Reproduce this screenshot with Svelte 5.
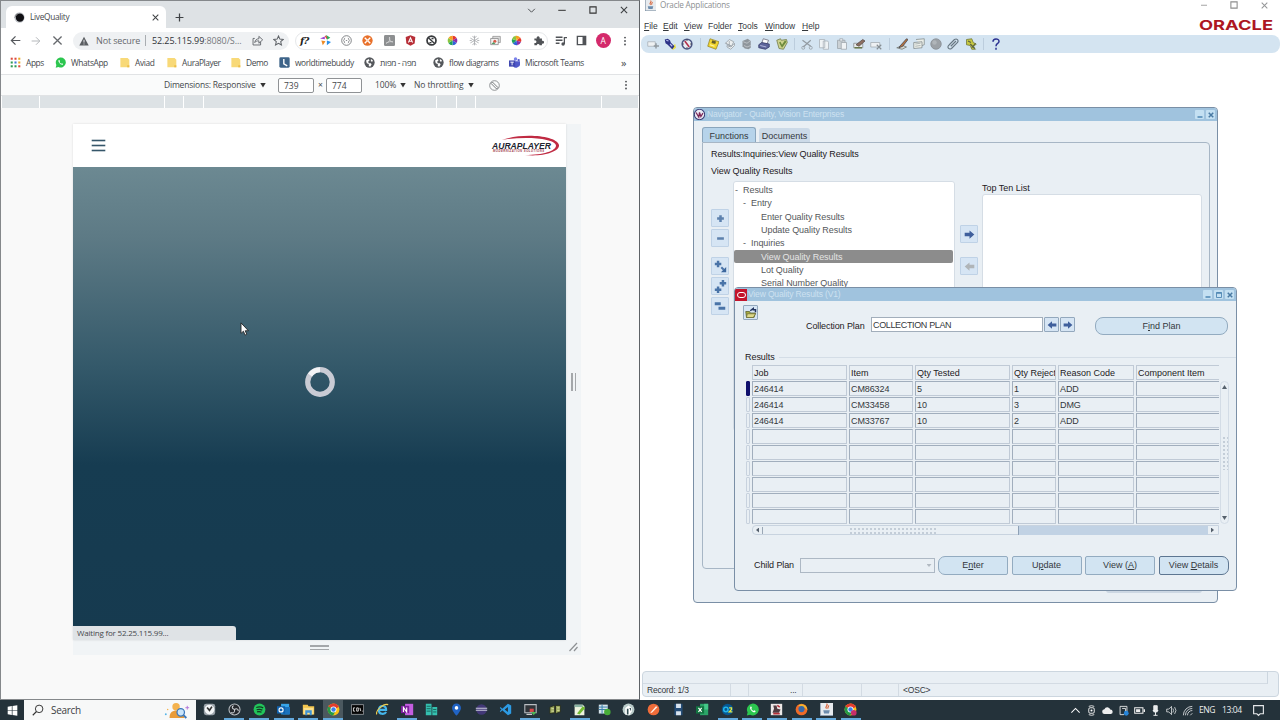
<script lang="ts">
	const extensions = ['pinwheel', 'braces', 'xorange', 'adobe', 'angular', 'nosign', 'wheel', 'flake', 'photo', 'wheel2', 'puzzle'];

	const bookmarks = [
		{ icon: 'apps', label: 'Apps', width: 45 },
		{ icon: 'whatsapp', label: 'WhatsApp', width: 64 },
		{ icon: 'folder', label: 'Aviad', width: 47 },
		{ icon: 'folder', label: 'AuraPlayer', width: 64 },
		{ icon: 'folder', label: 'Demo', width: 49 },
		{ icon: 'clock', label: 'worldtimebuddy', width: 85 },
		{ icon: 'globe', label: 'מפה - מפות', width: 69 },
		{ icon: 'globe', label: 'flow diagrams', width: 76 },
		{ icon: 'teams', label: 'Microsoft Teams', width: 80 }
	];

	const rulerSegments = [37, 124, 18, 19, 232, 19, 18, 125, 36];

	const menus = [
		['', 'F', 'ile', 19],
		['', 'E', 'dit', 21],
		['', 'V', 'iew', 24],
		['Fo', 'l', 'der', 30],
		['', 'T', 'ools', 27],
		['', 'W', 'indow', 37],
		['', 'H', 'elp', 20]
	];

	const toolGroups = [
		['newrec', 'torch', 'compass'],
		['save', 'stack', 'database', 'printer', 'check'],
		['cut', 'copy', 'paste', 'clear', 'delrec'],
		['pencil', 'folders', 'disc', 'clip', 'tools'],
		['help']
	];

	const tree = [
		{ level: 0, label: 'Results', open: true },
		{ level: 1, label: 'Entry', open: true },
		{ level: 2, label: 'Enter Quality Results' },
		{ level: 2, label: 'Update Quality Results' },
		{ level: 1, label: 'Inquiries', open: true },
		{ level: 2, label: 'View Quality Results', selected: true },
		{ level: 2, label: 'Lot Quality' },
		{ level: 2, label: 'Serial Number Quality' }
	];

	const columns = ['Job', 'Item', 'Qty Tested', 'Qty Reject', 'Reason Code', 'Component Item'];
	const rows = [
		['246414', 'CM86324', '5', '1', 'ADD', ''],
		['246414', 'CM33458', '10', '3', 'DMG', ''],
		['246414', 'CM33767', '10', '2', 'ADD', ''],
		...Array.from({ length: 6 }, () => ['', '', '', '', '', ''])
	];

	const tasks = [
		{ icon: 'tclock' },
		{ icon: 'obs', running: true },
		{ icon: 'spotify', running: true },
		{ icon: 'outlook', running: true },
		{ icon: 'explorer', running: true },
		{ icon: 'chrome', running: true, active: true },
		{ icon: 'cmd' },
		{ icon: 'ie' },
		{ icon: 'onenote', running: true },
		{ icon: 'server' },
		{ icon: 'pin' },
		{ icon: 'eclipse' },
		{ icon: 'vscode' },
		{ icon: 'monitor', running: true },
		{ icon: 'winscp' },
		{ icon: 'notepad', running: true },
		{ icon: 'sheet' },
		{ icon: 'bird' },
		{ icon: 'postman' },
		{ icon: 'disk' },
		{ icon: 'excel' },
		{ icon: 'o2', running: true },
		{ icon: 'whatsapp', running: true },
		{ icon: 'joker', running: true },
		{ icon: 'firefox', running: true },
		{ icon: 'java', running: true },
		{ icon: 'chrome2', running: true }
	];

	const tray = ['up', 'meet', 'cloud', 'sync', 'battery', 'mic', 'sound', 'wifi'];

	const wheelSlices = `
		<path fill="#e8382c" d="M8 8V1a7 7 0 0 1 6 3.5z"/><path fill="#8d2fa8" d="M8 8l6-3.5a7 7 0 0 1 0 7z"/>
		<path fill="#2f62d8" d="M8 8l6 3.5A7 7 0 0 1 8 15z"/><path fill="#1fa35a" d="M8 8v7a7 7 0 0 1-6-3.5z"/>
		<path fill="#8bc53f" d="M8 8l-6 3.5a7 7 0 0 1 0-7z"/><path fill="#f4a21f" d="M8 8L2 4.5A7 7 0 0 1 8 1z"/>`;

	const chromeLogo = `
		<circle cx="8" cy="8" r="7.3" fill="#fbc116"/>
		<path fill="#e33b2e" d="M8 8L1.7 4.3A7.3 7.3 0 0 1 14.6 5z"/>
		<path fill="#249a48" d="M8 8L1.7 4.3A7.3 7.3 0 0 0 7.5 15.3L10.5 10z"/>
		<circle cx="8" cy="8" r="3.7" fill="#fff"/><circle cx="8" cy="8" r="2.7" fill="#3d7fe8"/>`;

	const icons: Record<string, string> = {
		favicon: '<circle cx="8" cy="8" r="7.5" fill="#c3c6cb"/><circle cx="8.6" cy="8.2" r="6" fill="#101014"/><path d="M2 5l3-3M1 8l2-3" stroke="#555" fill="none"/>',
		close: '<path d="M3 3l10 10M13 3L3 13" stroke="#3f4245" stroke-width="1.8" fill="none"/>',
		stop: '<path d="M3 3l10 10M13 3L3 13" stroke="#66696d" stroke-width="1.6" fill="none"/>',
		plus: '<path d="M8 1v14M1 8h14" stroke="#3f4245" stroke-width="2.2" fill="none"/>',
		chevron: '<path d="M2 5l6 6 6-6" stroke="#3f4245" stroke-width="1.6" fill="none"/>',
		minimise: '<path d="M2 8.5h12" stroke="#333" stroke-width="1.6" fill="none"/>',
		maximise: '<path d="M3 3h10v10H3z" stroke="#333" stroke-width="1.7" fill="none"/>',
		winmin: '<path d="M3 12h10" stroke="#4f87b3" stroke-width="3" fill="none"/>',
		winmax: '<path d="M3 3h10v10H3z" stroke="#4f87b3" stroke-width="1.8" fill="none"/><path d="M3 4h10" stroke="#4f87b3" stroke-width="3"/>',
		winclose: '<path d="M3.500 3.500l9 9M12.500 3.500l-9 9" stroke="#4a7ba4" stroke-width="3" fill="none"/>',
		back: '<path d="M15 8H2M8 2L2 8l6 6" stroke="#55585c" stroke-width="1.8" fill="none"/>',
		forward: '<path d="M1 8h13M8 2l6 6-6 6" stroke="#b5b8bb" stroke-width="1.6" fill="none"/>',
		warning: '<path d="M8 1l7.5 14H.5z" fill="#5b5e62"/><path d="M8 6v4.5M8 12v1.5" stroke="#f0f2f4" stroke-width="1.5"/>',
		share: '<path d="M4 5H1.500v9.500h11V10M4 11c.5-4 3-5.500 6-5.500V2l5.500 5-5.500 5V8.500c-3 0-4.500.5-6 2.500z" stroke="#5f6368" stroke-width="1.300" fill="none"/>',
		star: '<path d="M8 1.500l2 4.500 4.800.5-3.600 3.200 1.100 4.800L8 12l-4.300 2.500 1.100-4.800L1.200 6.500 6 6z" stroke="#5f6368" stroke-width="1.500" fill="none"/>',
		pinwheel: '<path d="M0 5l7-3v4z" fill="#9b42d0"/><path d="M9 0l6 4-5 3z" fill="#25b35d"/><path d="M2 8l6 1-4 6z" fill="#ef8b22"/><path d="M10 8l6 2-6 5z" fill="#2b8fe8"/><path d="M8 1l2 4" stroke="#e3372e" stroke-width="2"/>',
		braces: '<circle cx="8" cy="8" r="7" stroke="#74777b" stroke-width="1.300" fill="none"/><path d="M6 4.500c-2 0-.5 3-2.200 3.500C5.500 8.500 4 11.500 6 11.500M10 4.500c2 0 .5 3 2.200 3.500-1.700.5-.2 3.500-2.200 3.500M7 8h2" stroke="#74777b" stroke-width="1.200" fill="none"/>',
		xorange: '<circle cx="8" cy="8" r="7.500" fill="#e8702a"/><path d="M4 4l8 8M12 4l-8 8" stroke="#fff" stroke-width="2"/><circle cx="8" cy="8" r="2" fill="#ffd7bd"/>',
		adobe: '<rect width="16" height="16" rx="2" fill="#8d8f91"/><path d="M3 12c5-2 6-5 5-9-1 4 1 7 5 7-4-1-7 0-10 2z" stroke="#d4d5d6" stroke-width="1.200" fill="none"/>',
		angular: '<path d="M8 .5l7 2.500-1 9.500-6 3-6-3L1 3z" fill="#b72f38"/><path d="M5 11l3-7 3 7M6 9h4" stroke="#fff" stroke-width="1.500" fill="none"/>',
		nosign: '<circle cx="8" cy="8" r="6.500" stroke="#383a3d" stroke-width="2.500" fill="none"/><path d="M3.500 4l9 8.500M5 11h3M8 5h3" stroke="#383a3d" stroke-width="2"/>',
		wheel: wheelSlices,
		wheel2: '<g transform="rotate(50 8 8)">' + wheelSlices + '</g>',
		flake: '<path d="M8 1v14M2 4.500l12 7M14 4.500l-12 7M5 2l3 2 3-2M5 14l3-2 3 2M1 8h3M12 8h3" stroke="#a5a8ab" stroke-width="1.200" fill="none"/>',
		photo: '<path d="M4 2h11v9H4z" fill="#ddd" stroke="#888"/><path d="M1 5h11v9H1z" fill="#f3f3f3" stroke="#777"/><circle cx="7" cy="9" r="2.200" fill="#d85c4a"/><path d="M2 13l3-3 3 3z" fill="#4f9a62"/>',
		puzzle: '<path d="M2 5h3.500a2.200 2.200 0 1 1 4 0H13v3.500a2.200 2.200 0 1 1 0 4V15H9.500a2 2 0 1 0-4 0H2v-3.500a2 2 0 1 0 0-3.500z" fill="#505357"/>',
		playlist: '<path d="M1 3h9M1 7h9M1 11h5M12.500 12V3.500H16" stroke="#505357" stroke-width="1.700" fill="none"/><circle cx="10.800" cy="12" r="2.300" fill="#505357"/>',
		panel: '<path d="M2 2h12v12H2z" stroke="#505357" stroke-width="2" fill="none"/><path d="M9.500 2H14v12H9.500z" fill="#505357"/>',
		dots: '<g fill="#505357"><circle cx="8" cy="2.500" r="1.500"/><circle cx="8" cy="8" r="1.500"/><circle cx="8" cy="13.500" r="1.500"/></g>',
		apps: '<path d="M1 1h3v3H1z" fill="#dc4a3d"/><path d="M6.500 1h3v3h-3z" fill="#dc4a3d"/><path d="M12 1h3v3h-3z" fill="#e9a825"/><path d="M1 6.500h3v3H1z" fill="#2f9b55"/><path d="M6.500 6.500h3v3h-3z" fill="#3e77d6"/><path d="M12 6.500h3v3h-3z" fill="#e9a825"/><path d="M1 12h3v3H1z" fill="#2f9b55"/><path d="M6.500 12h3v3h-3z" fill="#2f9b55"/><path d="M12 12h3v3h-3z" fill="#dc4a3d"/>',
		whatsapp: '<path d="M1 15.500l1-4A7.300 7.300 0 1 1 5 14.500z" fill="#2cc64f"/><path d="M5.500 4.500c-2 2 2.500 7.500 5.500 6.800 1.300-.8 1-1.500-.8-2.300l-1 .8C8 9.300 7 8.300 6.500 7.200l.8-1c-.5-1.500-1-2-1.800-1.700z" fill="#fff"/>',
		folder: '<path d="M2 1.500h10.500L15 4v11H2z" fill="#f8d978"/><path d="M12 12h3v3h-3z" fill="#edbd45"/>',
		clock: '<rect x=".5" y=".5" width="15" height="15" rx="2" fill="#3e6489"/><path d="M7 3v7l5 3" stroke="#fff" stroke-width="2" fill="none"/>',
		globe: '<circle cx="8" cy="8" r="7.500" fill="#55585c"/><path d="M3 5l4-2 1 2-2 2 1 2 3 0 1 2-2 3-2-1 0-3-3-1zM10 3l3 2-1 2-2-1z" fill="#fff"/>',
		teams: '<circle cx="9.500" cy="3" r="2.500" fill="#7b83eb"/><circle cx="14" cy="4.500" r="1.700" fill="#5059c9"/><path d="M6 6h10v4a4 4 0 0 1-3 4.500 5 5 0 0 1-7-1z" fill="#5059c9"/><path d="M0 5h9v9H0z" fill="#4048b0"/><path d="M2 7.500h5M4.500 7.500V12" stroke="#fff" stroke-width="1.300"/>',
		rotate: '<circle cx="8" cy="8" r="7" stroke="#7c7f82" stroke-width="1.200" fill="none"/><path d="M5 3l8 8-2 2-8-8z" stroke="#6b6e71" stroke-width="1.300" fill="none"/>',
		java: '<rect width="16" height="16" fill="#e7ebef"/><path d="M0 0v16h16" stroke="#71859a" stroke-width="1.600" fill="none"/><path d="M8 1c3 2-3 3 0 6M10.500 3c1 1-2 2-.5 4" stroke="#d9653b" stroke-width="1.500" fill="none"/><path d="M4 9h8l-1 4H5z" fill="#6d8cad"/>',
		newrec: '<path d="M1 5h10v6H1z" fill="#eef1f3" stroke="#a5adb4"/><path d="M12 7v7M9 10.500h7" stroke="#9199a0" stroke-width="2"/>',
		torch: '<path d="M9 12l6-4 1 5-4 3z" fill="#e9e04a"/><path d="M1 2l4-1 3 2 1 3 5 5-3 4-6-6-3-2z" fill="#2c3287"/><path d="M3 3l3 1M8 8l3 3" stroke="#b8bdf0" stroke-width="1.500"/>',
		compass: '<circle cx="8" cy="8" r="6.500" fill="#e8ecf4" stroke="#4b5582" stroke-width="2"/><path d="M5 4l6 8" stroke="#b12e4a" stroke-width="2"/><path d="M8 2v2M8 12v2M2 8h2M12 8h2" stroke="#333"/>',
		save: '<path d="M4 1l12 4-4 10L1 11z" fill="#f2d52d" stroke="#94842a"/><path d="M7 3l5 1.500-1 3.500-5-1.500z" fill="#665f27"/><path d="M4 9l6 2" stroke="#fff8a8" stroke-width="1.500"/>',
		stack: '<path d="M2 7l5-5 6 3-3 6zM4 10l5 2 5-5v3l-5 5-5-3zM7 4v8M2 7l8 4" fill="#edf0f1" stroke="#9aa1a7" stroke-width="1.100"/>',
		database: '<path d="M2 4l7-3 4 3v9l-3 2-5-1-3-3z" fill="#8f969c"/><path d="M3 5l5 2 4-3M4 10l4 2 5-2" stroke="#c9ced1" fill="none"/>',
		printer: '<path d="M5 7l2-6 7 2-2 5z" fill="#fff" stroke="#667"/><path d="M1 9l4-3 10 2v4l-5 3-9-2z" fill="#5d659b" stroke="#343a67"/><path d="M3 10l8 2" stroke="#ccd0ef"/>',
		check: '<path d="M1 3l5-2 1 2 7-1 1 4-5 9-6-1z" fill="#cdd28d" stroke="#6c7541"/><path d="M4 6l4 7 6-8-2-2-4 6-2-4z" fill="#6d8a3c"/>',
		cut: '<path d="M2 3l11 8M13 3L3 12" stroke="#939ba2" stroke-width="1.600"/><circle cx="3" cy="13" r="2" stroke="#939ba2" fill="none"/><circle cx="13" cy="13" r="2" stroke="#939ba2" fill="none"/>',
		copy: '<path d="M2 2h7v11H2zM7 4h6l1 2v9H7z" fill="#eff3f5" stroke="#a7afb6"/>',
		paste: '<path d="M2 3h10v11H2z" fill="#cbd1d5" stroke="#9ba3a9"/><path d="M5 1h4v3H5zM7 6h7v9H7z" fill="#f0f3f5" stroke="#9ba3a9"/>',
		clear: '<path d="M1 7h12v6H1z" fill="#e9ecea" stroke="#81878b"/><path d="M4 9l9-7 3 2-8 7z" fill="#8d6f61" stroke="#574b48"/><path d="M2 13h10" stroke="#687849" stroke-width="2"/>',
		delrec: '<path d="M1 6h12v6H1z" fill="#eef1f3" stroke="#a1a9af"/><path d="M9 9l6 6M15 9l-6 6" stroke="#868e94" stroke-width="1.500"/>',
		pencil: '<path d="M1 13l8-3 5 2-6 3z" fill="#d6d8d0" stroke="#6f746f"/><path d="M5 11L14 1l2 1-7 9-5 2z" fill="#b8733e" stroke="#3c4350"/>',
		folders: '<path d="M4 2l11-1v8l-3 1M1 6l11-1v8l-11 1z" fill="#ecefe9" stroke="#7e8788"/><path d="M3 8l7-1M3 11l7-1" stroke="#9ca4a5"/>',
		disc: '<circle cx="8" cy="8" r="7" fill="#9ca1a6" stroke="#858b91"/><circle cx="6" cy="6" r="3" fill="#b0b5b9"/>',
		clip: '<path d="M3 9l7-7c3-2 6 1 4 4l-8 8c-3 2-6-1-4-4l7-7M5 11l7-7" stroke="#687782" stroke-width="1.500" fill="none"/>',
		tools: '<path d="M2 2l7-1 2 5 4 2-4 4 3 3-5 0-2-5-5-1z" fill="#c7c841" stroke="#6b7435"/><path d="M4 4l4 2M7 8l6 6M14 7l-5 6" stroke="#5b6341" stroke-width="1.500"/>',
		help: '<path d="M4 5c0-5 8-5 8-.5C12 7.500 8 7 8 11M8 13v2.500" stroke="#2c3291" stroke-width="2" fill="none"/>',
		nav: '<circle cx="8" cy="8" r="7.500" fill="#eaeaf4" stroke="#3e3f79" stroke-width="1.500"/><path d="M3 5l4 7 1-7 2 6 3-5" stroke="#7c2757" stroke-width="1.800" fill="none"/>',
		expand: '<path d="M8 2v12M2 8h12" stroke="#5d81ad" stroke-width="4.500"/>',
		collapse: '<path d="M2 8h12" stroke="#5d81ad" stroke-width="4.500"/>',
		branch: '<path d="M5 1v8M1 5h8" stroke="#4a74a8" stroke-width="3"/><path d="M9 9l3 3" stroke="#4a74a8" stroke-width="2.500"/><path d="M15 8.500V15H8.500z" fill="#3c679d"/>',
		branchall: '<path d="M11 0v8M7 4h8M5 8v8M1 12h8" stroke="#4a74a8" stroke-width="3"/>',
		collapseall: '<path d="M1 5h8M6 11h9" stroke="#4a74a8" stroke-width="4"/>',
		right: '<path d="M1 5.500h7V2l7 6-7 6v-3.500H1z" fill="#3f5f9c"/>',
		left: '<path d="M15 5.500H8V2L1 8l7 6v-3.500h7z" fill="#3f5f9c"/>',
		leftoff: '<path d="M15 5.500H8V2L1 8l7 6v-3.500h7z" fill="#b0b5b8"/>',
		open: '<path d="M1 6h5l1 2h7l-2 6H2z" fill="#a9ad3f" stroke="#575b2c"/><path d="M3 9h11l-3 5H2z" fill="#ded989" stroke="#6b6c35"/><path d="M7 5l4-3v1.500h3V7" stroke="#23345f" stroke-width="2" fill="none"/>',
		start: '<path d="M1 2.500l6-1v6H1zM8 1.300L15 .3v7.200H8zM1 8.500h6v6l-6-1zM8 8.500h7v7.200l-7-1z" fill="#fff"/>',
		search: '<circle cx="9.500" cy="6.500" r="5" stroke="#333" stroke-width="1.300" fill="none"/><path d="M6 10l-5 5" stroke="#333" stroke-width="1.500"/>',
		tclock: '<rect x="1" y="1" width="14" height="14" rx="3" fill="#9ba3aa"/><circle cx="8" cy="8" r="6" fill="#f2f4f6"/><path d="M5 5.500L8 9l3-4.500" stroke="#333" stroke-width="2" fill="none"/>',
		obs: '<circle cx="8" cy="8" r="6.800" fill="#25282c" stroke="#babfc4" stroke-width="1.300"/><path d="M8 8c-4-1-3-4-1-4.500M8 8c3-2 5 0 4.500 2M8 8c1 4-2 5-4 3.500" stroke="#d0d4d8" stroke-width="1.300" fill="none"/>',
		spotify: '<circle cx="8" cy="8" r="7.300" fill="#22c55b"/><path d="M4 5.500q5-1.500 8.500.5M4.500 8.300q4-1.200 7 .5M5 11q3-1 5.500.4" stroke="#123b22" stroke-width="1.500" fill="none"/>',
		outlook: '<path d="M5 1h10v13H5z" fill="#38a5e8"/><path d="M10 5h6v9H7z" fill="#1b73bd"/><path d="M0 4h10v9H0z" fill="#0f61ad"/><circle cx="5" cy="8.500" r="2.500" stroke="#fff" stroke-width="1.400" fill="none"/>',
		explorer: '<path d="M1 2h6l1 2h7v10H1z" fill="#f4c64e"/><path d="M2 6h12v8H2z" fill="#fbe08d"/><path d="M4 9h8v6h-2.500v-3h-3v3H4z" fill="#3f93d5"/>',
		chrome: chromeLogo,
		chrome2: chromeLogo + '<circle cx="12" cy="12" r="3.500" fill="#c72f6b"/>',
		cmd: '<path d="M.5 2h15v12H.5z" fill="#050505" stroke="#9ba0a5"/><path d="M5 6H3v4h2M7 6v4h2V6zM11 6l1 4M14 10h1" stroke="#e2e2e2" stroke-width="1.100" fill="none"/>',
		ie: '<path d="M3.500 8.500h9C13 2.500 4 1.500 3.500 8.500c0 6 7 6 9 2.500" stroke="#45b6ec" stroke-width="2.600" fill="none"/><path d="M1 14C-1 10 9 0 15 2" stroke="#edcc4f" stroke-width="1.500" fill="none"/>',
		onenote: '<path d="M5 1h10v14H5z" fill="#c35ee0"/><path d="M0 3.500h10v9H0z" fill="#7d1f9e"/><path d="M3 11V5.500L7 11V5.500" stroke="#fff" stroke-width="1.400" fill="none"/>',
		server: '<path d="M1 1h7v14H1zM9 5h6v10H9z" fill="#35c0b0"/><path d="M2 4h5M2 7h5M2 10h5M10 8h4M10 11h4" stroke="#12564f"/>',
		pin: '<path d="M8 .5a5.500 5.500 0 0 1 5.500 5.500C13.500 10 8 15.500 8 15.500S2.500 10 2.500 6A5.500 5.500 0 0 1 8 .5z" fill="#2063c4"/><circle cx="8" cy="6" r="2.200" fill="#fff"/>',
		eclipse: '<circle cx="8" cy="8" r="6.500" fill="#423877"/><path d="M1 6.500h14M1 9h14" stroke="#c9c9dc" stroke-width="1.300"/>',
		vscode: '<path d="M11 1l4 2v10l-4 2-7-6-2 2-1-1 2-2-2-2 1-1 2 2zM11 5L7 8l4 3z" fill="#2d9be4" fill-rule="evenodd"/>',
		monitor: '<path d="M1 2h14v10H1z" fill="#30353a" stroke="#b9bec3" stroke-width="1.300"/><path d="M3 14h7" stroke="#ccc" stroke-width="1.500"/><path d="M7 7h5v4H7z" fill="#d94a4a"/><path d="M9 11h6l-3 4z" fill="#4fba55"/>',
		winscp: '<path d="M1 5l6-2v9l-6 1zM8 3h6v8l-6 2z" fill="#9aa75b" stroke="#20251b"/><path d="M3 7h3M10 6h3M3 10h3M10 9h3" stroke="#e6eab4"/>',
		notepad: '<path d="M2 2h10l2 2v11H2z" fill="#eef3df"/><path d="M2 2h10v3H2z" fill="#8bb3a3"/><path d="M5 13l7-9 3 2-7 8z" fill="#73bb32"/>',
		sheet: '<path d="M1 2h11v11H1z" fill="#d6e4ea"/><path d="M1 5h11M1 8h11M5 2v11" stroke="#397fac" stroke-width="1.200"/><circle cx="11.500" cy="11" r="4" fill="#47ad38"/>',
		bird: '<circle cx="8" cy="8" r="7.300" fill="#b9cbc9"/><path d="M4 14V6l4-3 4 3v4l-3 5z" fill="#fff"/><path d="M6 7h2v7H6zM9 6h2v4" fill="#304c50"/>',
		postman: '<circle cx="8" cy="8" r="7.200" fill="#ef6c39"/><path d="M4 12l7-8 2 1-7 7z" fill="#fff0e7"/>',
		disk: '<path d="M3 1h10v14H3z" fill="#254d77"/><path d="M5 1h6v5H5zM5 10h6v5H5z" fill="#d8e3ee"/>',
		excel: '<path d="M5 1h10v14H5z" fill="#2ba568"/><path d="M10 1h5v7h-5z" fill="#44c889"/><path d="M0 4h10v9H0z" fill="#127541"/><path d="M3 6l4 5M7 6l-4 5" stroke="#fff" stroke-width="1.400"/>',
		o2: '<circle cx="8" cy="8" r="7" fill="#075892"/><circle cx="6" cy="8" r="2.700" stroke="#23b6eb" stroke-width="1.800" fill="none"/><path d="M10 6h3v2l-3 3h4" stroke="#e5e840" stroke-width="1.500" fill="none"/>',
		joker: '<path d="M1 1h14v14H1z" fill="#ebe8e7"/><path d="M4 3h4l1 4 4 1-2 4H3l2-5z" fill="#513b40"/><path d="M9 3l3 2M4 13h8" stroke="#b52f38" stroke-width="2"/>',
		firefox: '<circle cx="8" cy="8" r="7.200" fill="#ef6b28"/><path d="M4 3c5-4 12 1 11 6-3-5-6-3-11-6z" fill="#f5b72f"/><circle cx="8" cy="7.500" r="3.800" fill="#376aa9"/>',
		up: '<path d="M2 11l6-6 6 6" stroke="#fff" stroke-width="1.500" fill="none"/>',
		meet: '<path d="M4 2q4-2 8 0M4 14q4 2 8 0" stroke="#eee" stroke-width="1.300" fill="none"/><rect x="4" y="4" width="8" height="8" rx="2" stroke="#eee" stroke-width="1.400" fill="none"/><circle cx="8" cy="8" r="1.500" fill="#fff"/>',
		cloud: '<path d="M4 13a3.500 3.500 0 0 1-.5-7A4.500 4.500 0 0 1 12 6.500 3.300 3.300 0 0 1 13 13z" fill="#eee"/>',
		sync: '<path d="M3 2h10v9M3 2v12h6M6 5h5v5" stroke="#e5e7e9" stroke-width="1.300" fill="none"/><circle cx="12" cy="12" r="3.500" fill="#2785d9"/>',
		battery: '<path d="M1 4h12v8H1z" stroke="#eee" stroke-width="1.500" fill="none"/><path d="M3 6h6v4H3zM14 6h2v4h-2z" fill="#eee"/>',
		mic: '<path d="M5.500 1h5v9h-5zM4 8h8M8 9v6M5 15h6" fill="#e9ebec" stroke="#e9ebec" stroke-width="1.400"/>',
		sound: '<path d="M1 6h3l4-4v12l-4-4H1zM10 5q2 3 0 6M12.500 3q4 5 0 10" stroke="#dcdfe1" stroke-width="1.200" fill="none"/>',
		wifi: '<path d="M2 15A13 13 0 0 1 15 2M5 15A10 10 0 0 1 15 5M8 15a7 7 0 0 1 7-7M12 15l3-3" stroke="#c8cccf" stroke-width="1.400" fill="none"/>',
		notice: '<path d="M2 2h12v10h-4l-2 2-2-2H2z" stroke="#e5e7e9" stroke-width="1.400" fill="none"/>'
	};
</script>

{#snippet icon(name: string, size = 10)}
	<svg class="icon" viewBox="0 0 16 16" width={size} height={size} aria-hidden="true">
		{@html icons[name]}
	</svg>
{/snippet}

<div class="desktop">
	<div class="workspace">
		<section class="browser">
			<div class="tabstrip">
				<div class="tab">
					{@render icon('favicon', 11)}
					<span class="tab-title">LiveQuality</span>
					{@render icon('close', 9)}
				</div>
				<span class="new-tab">{@render icon('plus', 9)}</span>
				<div class="caption">
					{@render icon('chevron', 9)}
					{@render icon('minimise', 10)}
					{@render icon('maximise', 10)}
					{@render icon('close', 10)}
				</div>
			</div>

			<div class="toolbar">
				<div class="nav-buttons">
					{@render icon('back', 11)}
					{@render icon('forward', 10)}
					{@render icon('stop', 13)}
				</div>
				<div class="omnibox">
					{@render icon('warning', 10)}
					<span class="secure">Not secure</span>
					<span class="url">52.25.115.99<span>:8080/S...</span></span>
					{@render icon('share', 11)}
					{@render icon('star', 11)}
				</div>
				<div class="extensions">
					<span class="fx">f?</span>
					{#each extensions as name}
						<span class="ext">{@render icon(name, 11)}</span>
					{/each}
				</div>
				<span class="ext after">{@render icon('playlist', 12)}</span>
				<span class="ext">{@render icon('panel', 11)}</span>
				<span class="avatar">A</span>
				<span class="more">{@render icon('dots', 10)}</span>
			</div>

			<div class="bookmarks">
				{#each bookmarks as mark}
					<span class="bookmark" style:width="{mark.width}px">
						{@render icon(mark.icon, 11)}
						<span>{mark.label}</span>
					</span>
				{/each}
				<span class="overflow">»</span>
			</div>

			<div class="device-bar">
				<span class="dimensions">Dimensions: Responsive</span>
				<i class="caret"></i>
				<span class="size">739</span>
				<span class="times">×</span>
				<span class="size">774</span>
				<span class="zoom">100%</span>
				<i class="caret"></i>
				<span class="throttle">No throttling</span>
				<i class="caret"></i>
				<span class="rotate">{@render icon('rotate', 11)}</span>
				<span class="device-more">{@render icon('dots', 10)}</span>
			</div>

			<div class="ruler">
				{#each rulerSegments as width}
					<span style:width="{width}px"></span>
				{/each}
			</div>

			<div class="stage">
				<div class="device">
					<div class="app">
						<header>
							<span class="burger"><i></i><i></i><i></i></span>
							<svg class="aura" viewBox="0 0 70 24" width="70" height="24">
								<path d="M11 6C30-1 65 1 68 11c1 7-17 12-34 10 18 0 31-4 31-9.500C64 4 33 2 11 6z" fill="#c02b43" />
								<text x="1" y="14.500" textLength="59" lengthAdjust="spacingAndGlyphs">AURAPLAYER</text>
								<text class="tagline" x="2" y="18" textLength="51">MODERNIZATION SOLUTIONS</text>
							</svg>
						</header>
						<div class="screen">
							<svg class="spinner" viewBox="0 0 34 34" width="34" height="34">
								<circle cx="17" cy="17" r="12.300" fill="none" stroke="#c9cbd4" stroke-width="5.200" />
								<path d="M7 10A12.300 12.300 0 0 1 17 4.700" fill="none" stroke="#f3f4f6" stroke-width="5" />
							</svg>
							<span class="status-bubble">Waiting for 52.25.115.99...</span>
						</div>
					</div>
					<div class="handle-right"><i></i><i></i></div>
					<div class="handle-bottom"><span><i></i><i></i></span></div>
					<svg class="handle-corner" viewBox="0 0 15 15" width="15" height="15"><path d="M3.500 11L11 3M8 11l3.500-4" stroke="#8e9194" stroke-width="1.200" /></svg>
				</div>
			</div>
			<svg class="cursor" viewBox="0 0 10 16" width="9" height="14"><path d="M1 1v12l2.800-2.500L5.600 15l2-1-1.800-4H9.500z" fill="#fff" stroke="#222" /></svg>
		</section>

		<section class="oracle">
			<div class="oracle-title">
				{@render icon('java', 11)}
				<span class="title-text">Oracle Applications</span>
				<div class="oracle-caption">
					{@render icon('minimise', 8)}
					{@render icon('maximise', 10)}
					{@render icon('close', 9)}
				</div>
			</div>
			<div class="menubar">
				{#each menus as [before, key, after, width]}
					<span class="menu" style:width="{width}px">{before}<u>{key}</u>{after}</span>
				{/each}
				<svg class="oracle-logo" viewBox="0 0 78 14" width="78" height="14"><text x="0" y="12" textLength="74" lengthAdjust="spacingAndGlyphs">ORACLE</text></svg>
			</div>
			<div class="form-tools">
				{#each toolGroups as group}
					<div class="tool-group">
						{#each group as name}
							<span>{@render icon(name, 12)}</span>
						{/each}
					</div>
				{/each}
			</div>

			<div class="mdi">
				<div class="window navigator">
					<div class="window-title">
						{@render icon('nav', 11)}
						<span class="caption-text">Navigator - Quality, Vision Enterprises</span>
						<div class="window-buttons">
							<b>{@render icon('winmin', 8)}</b>
							<b>{@render icon('winclose', 8)}</b>
						</div>
					</div>
					<div class="nav-tabs">
						<span class="nav-tab current">Functions</span>
						<span class="nav-tab">Documents</span>
					</div>
					<div class="nav-panel">
						<div class="path">Results:Inquiries:View Quality Results</div>
						<div class="path second">View Quality Results</div>
						<div class="nav-columns">
							<div class="side-buttons">
								<b>{@render icon('expand', 9)}</b>
								<b>{@render icon('collapse', 9)}</b>
								<b class="gap">{@render icon('branch', 13)}</b>
								<b>{@render icon('branchall', 13)}</b>
								<b>{@render icon('collapseall', 12)}</b>
							</div>
							<div class="tree">
								{#each tree as node}
									<div class="node level{node.level}" class:selected={node.selected}>
										{#if node.open}<span class="dash">-</span>{/if}{node.label}
									</div>
								{/each}
							</div>
							<div class="move-buttons">
								<b>{@render icon('right', 11)}</b>
								<b>{@render icon('leftoff', 11)}</b>
							</div>
							<div class="top-ten">
								<span>Top Ten List</span>
								<div class="top-list"></div>
							</div>
						</div>
					</div>
					<div class="peek"></div>
				</div>

				<div class="window results">
					<div class="window-title">
						<span class="o-badge"><i></i></span>
						<span class="caption-text">View Quality Results (V1)</span>
						<div class="window-buttons">
							<b>{@render icon('winmin', 8)}</b>
							<b>{@render icon('winmax', 8)}</b>
							<b>{@render icon('winclose', 8)}</b>
						</div>
					</div>
					<div class="plan-row">
						<b class="open">{@render icon('open', 12)}</b>
						<span class="plan-label">Collection Plan</span>
						<span class="plan-input">COLLECTION PLAN</span>
						<b class="step">{@render icon('left', 10)}</b>
						<b class="step">{@render icon('right', 10)}</b>
						<span class="button find">F<u>i</u>nd Plan</span>
					</div>
					<div class="legend"><span>Results</span></div>
					<div class="grid-area">
						<div class="grid">
							<span></span>
							{#each columns as column}
								<span class="cell head">{column}</span>
							{/each}
							{#each rows as row, i}
								<span class="marker" class:on={i === 0}></span>
								{#each row as value}
									<span class="cell">{value}</span>
								{/each}
							{/each}
						</div>
						<div class="vscroll">
							<i class="arrow up"></i>
							<span class="grip"></span>
							<i class="arrow down"></i>
						</div>
					</div>
					<div class="hscroll">
						<i class="arrow left"></i>
						<span class="track"><span class="grip"></span></span>
						<span class="thumb"></span>
						<i class="arrow right"></i>
					</div>
					<div class="actions">
						<span class="child-label">Child Plan</span>
						<span class="combo"><i></i></span>
						<span class="button first">E<u>n</u>ter</span>
						<span class="button">U<u>p</u>date</span>
						<span class="button">View (<u>A</u>)</span>
						<span class="button last">View <u>D</u>etails</span>
					</div>
				</div>
			</div>

			<div class="form-status">
				<div class="message"></div>
				<div class="fields">
					<span>Record: 1/3</span>
					<span></span>
					<span class="ellipsis">...</span>
					<span></span>
					<span></span>
					<span>&lt;OSC&gt;</span>
				</div>
			</div>
		</section>
	</div>

	<footer class="taskbar">
		<span class="start">{@render icon('start', 11)}</span>
		<div class="search">
			{@render icon('search', 12)}
			<span>Search</span>
			<svg class="doodle" viewBox="0 0 30 18" width="28" height="17">
				<circle cx="14" cy="5" r="4" fill="#f4b24d" />
				<path d="M7 17c0-7 4-8 8-8s7 3 8 8z" fill="#e99b37" />
				<circle cx="19" cy="11" r="4" fill="#c9e4fa" stroke="#3977bb" stroke-width="1.300" />
				<path d="M22 14l3 3" stroke="#3977bb" stroke-width="2" />
				<path d="M26 4v4M24 6h4" stroke="#b273d8" />
				<circle cx="3" cy="13" r="1" fill="#55b4e6" />
				<circle cx="5" cy="8" r=".8" fill="#f4b24d" />
			</svg>
		</div>
		<div class="tasks">
			{#each tasks as task}
				<span class="task" class:running={task.running} class:active={task.active}>{@render icon(task.icon, 13)}</span>
			{/each}
		</div>
		<div class="tray">
			{#each tray as name}
				<span>{@render icon(name, 11)}</span>
			{/each}
		</div>
		<span class="lang">ENG</span>
		<span class="time">13:04</span>
		<span class="notice">{@render icon('notice', 13)}</span>
	</footer>
</div>

<style>
	:global(body) {
		margin: 0;
		overflow: hidden;
	}

	.desktop {
		width: 1280px;
		height: 720px;
		overflow: hidden;
		background: #fff;
		font-family: 'Open Sans', 'Noto Sans', sans-serif;
		font-size: 9px;
		line-height: 12px;
		color: #45484c;
		white-space: nowrap;
	}

	.desktop * {
		box-sizing: border-box;
	}

	.icon {
		display: block;
		flex: none;
	}

	.workspace {
		display: flex;
		height: 700px;
	}

	/* browser */
	.browser {
		position: relative;
		display: flex;
		flex-direction: column;
		width: 640px;
		height: 700px;
		border: 1px solid #85888b;
		border-right-color: #5f6367;
		background: #fff;
		font-size: 8.5px;
	}

	.tabstrip {
		display: flex;
		height: 27px;
		background: #dee2e5;
	}

	.tab {
		display: flex;
		align-items: center;
		width: 160px;
		margin: 5px 0 0 5px;
		padding: 0 6px 0 8px;
		border-radius: 6px 6px 0 0;
		background: #fff;
	}

	.tab-title {
		flex: 1;
		margin-left: 5px;
		font-size: 8.3px;
		letter-spacing: -0.3px;
	}

	.new-tab {
		padding: 12px 0 0 9px;
	}

	.caption {
		display: flex;
		align-items: center;
		gap: 21px;
		height: 18px;
		margin-left: auto;
		padding-right: 10px;
	}

	.toolbar {
		display: flex;
		align-items: center;
		height: 25px;
	}

	.nav-buttons {
		display: flex;
		align-items: center;
		gap: 10px;
		width: 72px;
		padding-left: 9px;
	}

	.omnibox {
		display: flex;
		align-items: center;
		width: 216px;
		height: 18px;
		padding: 0 5px 0 6px;
		border-radius: 9px;
		background: #eff1f3;
		font-size: 9px;
		color: #66696d;
	}

	.secure {
		width: 50px;
		margin: 0 6px 0 7px;
		border-right: 1px solid #a9adb1;
		line-height: 11px;
		letter-spacing: -0.15px;
	}

	.url {
		flex: 1;
		color: #303338;
		letter-spacing: -0.1px;
	}

	.url span {
		color: #76797d;
	}

	.omnibox .icon:last-child {
		margin-left: 10px;
	}

	.extensions {
		display: flex;
		align-items: center;
		width: 253px;
		height: 18px;
		margin-left: 6px;
		border: 1px solid #e6e8ea;
		border-radius: 9px;
	}

	.fx {
		flex: none;
		width: 18.500px;
		padding-left: 4px;
		font: italic bold 10px 'DejaVu Serif', serif;
		letter-spacing: -0.8px;
		color: #222;
	}

	.ext {
		display: flex;
		justify-content: center;
		width: 21.3px;
		flex: none;
	}

	.after {
		margin-left: 2px;
	}

	.avatar {
		width: 15px;
		height: 15px;
		margin: 0 9px 0 3px;
		border-radius: 50%;
		background: #d42a6b;
		color: #fff;
		font-size: 8.5px;
		line-height: 15px;
		text-align: center;
	}

	.bookmarks {
		display: flex;
		align-items: center;
		height: 19px;
		padding-left: 9px;
		margin-bottom: 2px;
	}

	.bookmark {
		display: flex;
		align-items: center;
		gap: 5px;
		flex: none;
		font-size: 8.4px;
		letter-spacing: -0.4px;
	}

	.overflow {
		margin-left: 32px;
		font-size: 11px;
	}

	.device-bar {
		display: flex;
		align-items: center;
		height: 22px;
		padding-left: 163px;
		border-top: 1px solid #e1e3e5;
		border-bottom: 1px solid #e1e3e5;
		background: #fafbfb;
	}

	.dimensions {
		flex: none;
		width: 96px;
		letter-spacing: -0.2px;
	}

	.caret {
		width: 6px;
		height: 5px;
		background: #333;
		clip-path: polygon(0 0, 100% 0, 50% 100%);
	}

	.size {
		width: 36px;
		height: 15px;
		margin-left: 12px;
		padding-left: 5px;
		border: 1px solid #8f9295;
		border-radius: 2px;
		background: #fff;
		line-height: 14px;
	}

	.times {
		width: 6px;
		margin: 0 -6px 0 4px;
	}

	.times + .size {
		margin-left: 8px;
	}

	.zoom {
		width: 25px;
		margin-left: 13px;
		letter-spacing: -0.1px;
	}

	.throttle {
		width: 54px;
		margin-left: 8px;
		letter-spacing: -0.1px;
	}

	.rotate {
		margin-left: 15px;
	}

	.device-more {
		margin-left: 121px;
	}

	.ruler {
		display: flex;
		gap: 1px;
		height: 12px;
		padding: 0 2px 0 1px;
		background: #fff;
	}

	.ruler span {
		flex: none;
		background: #dde2e5;
	}

	.stage {
		flex: 1;
		padding: 16px 0 0 72px;
		background: #f9f9f9;
	}

	.device {
		display: grid;
		grid-template: 516px 15px / 493px 15px;
		width: 508px;
		background: #f1f4f6;
	}

	.app {
		display: flex;
		flex-direction: column;
		box-shadow: 0 0 2px rgba(0, 0, 0, 0.12);
	}

	.app header {
		display: flex;
		align-items: center;
		justify-content: space-between;
		height: 43px;
		padding: 0 5px 0 19px;
		background: #fff;
	}

	.burger {
		display: grid;
		gap: 4px;
		width: 13px;
	}

	.burger i {
		height: 1px;
		background: #35566a;
		box-shadow: 0 0 0 0.3px #35566a;
	}

	.aura text {
		font: italic bold 9px 'Liberation Sans', sans-serif;
		fill: #222531;
	}

	.aura .tagline {
		font-size: 2.800px;
		fill: #a03948;
	}

	.screen {
		flex: 1;
		display: flex;
		flex-direction: column;
		align-items: center;
		justify-content: space-between;
		padding-top: 198px;
		background: linear-gradient(#6c8992, #5d7a85 15%, #34596a 42%, #163c51 63%, #163a4f);
	}

	.status-bubble {
		align-self: flex-start;
		width: 163px;
		height: 14px;
		padding-left: 4px;
		border-radius: 0 3px 0 0;
		background: #dfe3e6;
		font-size: 8px;
		line-height: 14px;
		letter-spacing: -0.2px;
	}

	.handle-right {
		display: flex;
		align-items: center;
		justify-content: center;
		gap: 2px;
	}

	.handle-right i {
		width: 1.5px;
		height: 18px;
		background: #a4a7aa;
	}

	.handle-bottom {
		display: flex;
		align-items: center;
		justify-content: center;
	}

	.handle-bottom span {
		display: grid;
		gap: 2px;
		width: 19px;
	}

	.handle-bottom i {
		height: 1.5px;
		background: #a4a7aa;
	}

	.cursor {
		position: absolute;
		left: 239px;
		top: 321px;
	}

	/* oracle forms */
	.oracle {
		position: relative;
		display: flex;
		flex-direction: column;
		width: 640px;
		background: #fff;
		font-family: 'Liberation Sans', sans-serif;
		font-size: 9px;
		line-height: 11px;
		color: #34383c;
	}

	.oracle-title {
		display: flex;
		align-items: center;
		height: 11px;
		padding-left: 5px;
	}

	.title-text {
		margin: -2px 0 0 4px;
		font: 8.2px/11px 'Open Sans', sans-serif;
		letter-spacing: -0.2px;
		color: #8c8f92;
	}

	.oracle-caption {
		display: flex;
		align-items: center;
		gap: 21px;
		margin: -1px 0 0 auto;
		padding-right: 11px;
		opacity: 0.55;
	}

	.menubar {
		display: flex;
		align-items: center;
		height: 24px;
		padding: 6px 0 0 4px;
		font-size: 8.5px;
	}

	.menu {
		flex: none;
	}

	.oracle-logo {
		margin: -3px 3px 0 auto;
	}

	.oracle-logo text {
		font: bold 13.500px Inter, 'Liberation Sans', sans-serif;
		fill: #ad1722;
	}

	.form-tools {
		display: flex;
		align-items: center;
		height: 18px;
		margin-left: 1px;
		padding-left: 3px;
		border-radius: 8px;
		background: #d4e4f1;
	}

	.tool-group {
		display: flex;
		padding-right: 4px;
		margin-right: 3px;
		border-right: 1px solid #bccddd;
	}

	.tool-group:last-child {
		border: none;
	}

	.tool-group span {
		display: flex;
		justify-content: center;
		width: 17.3px;
	}

	.mdi {
		position: relative;
		flex: 1;
	}

	.window {
		position: absolute;
		display: flex;
		flex-direction: column;
		border: 1.5px solid #7a8fa6;
		border-radius: 4px;
		background: #e9eff4;
		overflow: hidden;
	}

	.window b {
		display: flex;
		align-items: center;
		justify-content: center;
		flex: none;
		border: 1px solid #bfd2e6;
		border-radius: 1px;
		background: #d6e5f4;
	}

	.navigator {
		left: 53px;
		top: 54px;
		width: 525px;
		height: 496px;
	}

	.results {
		left: 94px;
		top: 234px;
		width: 503px;
		height: 304px;
	}

	.window-title {
		display: flex;
		align-items: center;
		flex: none;
		height: 13px;
		background: #a0c3de;
		font-size: 8.5px;
		color: #cde1f0;
	}

	.caption-text {
		margin-left: 2px;
		letter-spacing: -0.15px;
	}

	.o-badge + .caption-text {
		margin-left: 1px;
	}

	.window-buttons {
		display: flex;
		gap: 2px;
		margin-left: auto;
		padding-right: 2px;
	}

	.window-buttons b {
		width: 9px;
		height: 9px;
		border: none;
		background: #c4e0f2;
	}

	.nav-tabs {
		display: flex;
		align-items: flex-end;
		gap: 3px;
		flex: none;
		height: 21px;
		padding-left: 8px;
	}

	.nav-tab {
		width: 51px;
		height: 14px;
		border-radius: 3px 3px 0 0;
		background: #ccdae8;
		line-height: 17px;
		text-align: center;
	}

	.nav-tab.current {
		width: 54px;
		height: 15px;
		border: 1px solid #8aa5bc;
		border-bottom: none;
		background: #b6d3ea;
	}

	.nav-panel {
		height: 427px;
		margin: 0 7px 0 8px;
		padding-left: 8px;
		border: 1px solid #a7b6c5;
		border-radius: 0 4px 4px 4px;
	}

	.path {
		padding-top: 6px;
		letter-spacing: -0.1px;
		color: #1d2023;
	}

	.path.second {
		letter-spacing: -0.05px;
	}

	.nav-columns {
		display: flex;
		margin-top: 4px;
	}

	.side-buttons {
		display: grid;
		align-content: start;
		gap: 2px;
		width: 22px;
		padding-top: 28px;
	}

	.side-buttons b {
		width: 18px;
		height: 18px;
	}

	.side-buttons .gap {
		margin-top: 8px;
	}

	.tree {
		width: 222px;
		height: 250px;
		padding: 1px 1px 0 0;
		border: 1px solid #d5dde5;
		border-radius: 3px;
		background: #fff;
		color: #55585b;
	}

	.node {
		height: 13.35px;
		padding-left: 9px;
		border-radius: 2px;
		line-height: 14.5px;
		letter-spacing: -0.05px;
	}

	.dash {
		display: inline-block;
		width: 8px;
		margin-left: -8px;
	}

	.level1 {
		padding-left: 17px;
	}

	.level2 {
		padding-left: 27px;
	}

	.node.selected {
		background: #8c8c8c;
		color: #e4e4e4;
	}

	.move-buttons {
		display: grid;
		align-content: start;
		gap: 14px;
		padding: 44px 4px 0 5px;
	}

	.move-buttons b {
		width: 18px;
		height: 18px;
	}

	.top-ten {
		padding-top: 2px;
		color: #1d2023;
	}

	.top-list {
		width: 220px;
		height: 240px;
		border: 1px solid #d5dde5;
		border-radius: 3px;
		background: #fff;
	}

	.peek {
		width: 96px;
		height: 3px;
		margin: 21px 0 0 412px;
		border-bottom: 2px solid #ccd7e3;
		border-radius: 0 0 4px 4px;
	}

	.o-badge {
		display: flex;
		align-items: center;
		justify-content: center;
		width: 12px;
		height: 12px;
		background: #c3142b;
	}

	.o-badge i {
		width: 9px;
		height: 6px;
		border: 1.500px solid #fff;
		border-radius: 3px;
	}

	.plan-row {
		display: flex;
		align-items: center;
		height: 50px;
		padding-left: 8px;
	}

	.window .open {
		width: 15px;
		height: 15px;
		margin-bottom: 27px;
		border-color: #93a8bd;
	}

	.plan-label {
		width: 65px;
		margin-left: 48px;
		letter-spacing: -0.1px;
		color: #1d2023;
	}

	.plan-input {
		width: 172px;
		height: 15px;
		margin-bottom: 3px;
		padding-left: 1px;
		border: 1px solid #a2aebb;
		background: #fff;
		line-height: 14px;
		letter-spacing: -0.35px;
	}

	.window .step {
		width: 15px;
		height: 15px;
		margin: 0 0 3px 1px;
		border-color: #93a8bd;
	}

	.button {
		flex: none;
		width: 70px;
		height: 19px;
		border: 1px solid #93abc0;
		border-radius: 2px;
		background: #d2e4f2;
		line-height: 17px;
		text-align: center;
	}

	.button.find {
		width: 133px;
		height: 18px;
		margin-left: 20px;
		border-radius: 8px;
	}

	.legend {
		display: flex;
		align-items: center;
		height: 13px;
		padding-left: 10px;
		letter-spacing: -0.05px;
		color: #1d2023;
	}

	.legend::after {
		content: '';
		flex: 1;
		height: 1px;
		margin-left: 4px;
		background: #d4dde6;
	}

	.grid-area {
		display: flex;
		padding: 1px 0 0 11px;
	}

	.grid {
		display: grid;
		grid-template-columns: 4px 95px 64px 95px 44px 76px 83px;
		grid-auto-rows: 15px;
		gap: 1px 2px;
		width: 473px;
	}

	.cell {
		overflow: hidden;
		padding-left: 1px;
		border: 1px solid #c0cad6;
		border-top-color: #a1aebd;
		border-left-color: #a1aebd;
		line-height: 14px;
		letter-spacing: -0.1px;
	}

	.cell:nth-child(7n) {
		border-right: none;
	}

	.cell.head {
		border-color: #c0cad6;
		color: #1d2023;
		line-height: 15px;
		letter-spacing: 0;
	}

	.marker {
		border: 1px solid #c8d2de;
		border-radius: 1px;
	}

	.marker.on {
		border-color: #10106c;
		background: #10106c;
	}

	.vscroll {
		display: flex;
		flex-direction: column;
		align-items: center;
		justify-content: space-between;
		width: 9px;
		height: 143px;
		margin: 16px 0 0 1px;
		padding: 3px 0;
		border: 1px solid #d3dce6;
		border-radius: 5px;
	}

	.arrow {
		width: 5px;
		height: 4px;
		background: #55606c;
	}

	.arrow.up {
		clip-path: polygon(50% 0, 100% 100%, 0 100%);
	}

	.arrow.down {
		clip-path: polygon(0 0, 100% 0, 50% 100%);
	}

	.arrow.left {
		height: 5px;
		clip-path: polygon(80% 0, 80% 100%, 20% 50%);
	}

	.arrow.right {
		height: 5px;
		clip-path: polygon(20% 0, 20% 100%, 80% 50%);
	}

	.grip {
		background-image: radial-gradient(#c3ccd7 0.7px, transparent 1px);
		background-size: 4px 4px;
	}

	.vscroll .grip {
		width: 6px;
		height: 34px;
	}

	.hscroll {
		display: flex;
		align-items: center;
		width: 467px;
		height: 10px;
		margin: 1px 0 0 17px;
		padding: 0 2px;
		border: 1px solid #c8d3df;
		border-radius: 4px 0 0 4px;
	}

	.hscroll .track {
		width: 256px;
		margin-left: 2px;
		border-left: 1px solid #9aa7b5;
	}

	.hscroll .track .grip {
		display: block;
		width: 88px;
		height: 7px;
		margin-left: 86px;
	}

	.thumb {
		width: 190px;
		height: 9px;
		margin-right: 2px;
		border-left: 1px solid #8ea1b6;
		background: #c1d2e4;
	}

	.actions {
		display: flex;
		align-items: center;
		gap: 3.500px;
		padding: 21px 0 0 19px;
	}

	.child-label {
		width: 42px;
		letter-spacing: -0.1px;
		color: #1d2023;
	}

	.combo {
		display: flex;
		align-items: center;
		justify-content: flex-end;
		width: 135px;
		height: 15px;
		padding-right: 2px;
		border: 1px solid #adb8c4;
	}

	.combo i {
		width: 5px;
		height: 3px;
		background: #b2bac2;
		clip-path: polygon(0 0, 100% 0, 50% 100%);
	}

	.button.first {
		border-radius: 7px 2px 2px 7px;
	}

	.button.last {
		border: 1.500px solid #5d7691;
		border-radius: 2px 7px 7px 2px;
	}

	.form-status {
		height: 26px;
		margin: 0 1px 3px 2px;
		border: 1px solid #ccd6df;
		border-radius: 4px;
		background: #e9eff4;
		font-size: 8.5px;
		letter-spacing: -0.2px;
	}

	.message {
		height: 12px;
		margin-right: 10px;
		border-right: 1px solid #ccd6df;
		border-bottom: 1px solid #d3dbe3;
	}

	.fields {
		display: grid;
		grid-template-columns: 88px 18px 54px 59px 37px 1fr;
		height: 12px;
	}

	.fields span {
		padding-left: 4px;
		border-right: 1px solid #d3dbe3;
		line-height: 12px;
	}

	.fields span:last-child {
		border: none;
	}

	.fields .ellipsis {
		padding-left: 41px;
	}

	/* taskbar */
	.taskbar {
		display: flex;
		align-items: center;
		height: 20px;
		background: #24323a;
		color: #eceeef;
	}

	.start {
		width: 24px;
		padding-left: 7px;
	}

	.search {
		display: flex;
		align-items: center;
		width: 172px;
		height: 20px;
		padding-left: 8px;
		background: #f7f8f8;
		font-size: 10px;
		letter-spacing: -0.3px;
		color: #3d4043;
	}

	.search span {
		flex: 1;
		margin-left: 7px;
	}

	.doodle {
		margin-right: 5px;
	}

	.tasks {
		display: flex;
		margin-left: 1.500px;
	}

	.task {
		display: flex;
		align-items: center;
		justify-content: center;
		width: 20px;
		height: 20px;
		margin: 0 2.33px;
		border-bottom: 2px solid transparent;
		border-top: 1px solid transparent;
	}

	.task.running {
		border-bottom-color: #64a9dc;
	}

	.task.active {
		background: #4b585f;
	}

	.tray {
		display: flex;
		margin-left: auto;
	}

	.tray span {
		display: flex;
		justify-content: center;
		width: 16px;
	}

	.lang,
	.time {
		font-size: 8.5px;
		letter-spacing: -0.4px;
	}

	.lang {
		margin-left: 4px;
		width: 23px;
	}

	.time {
		width: 30px;
	}

	.notice {
		width: 28px;
	}
</style>
